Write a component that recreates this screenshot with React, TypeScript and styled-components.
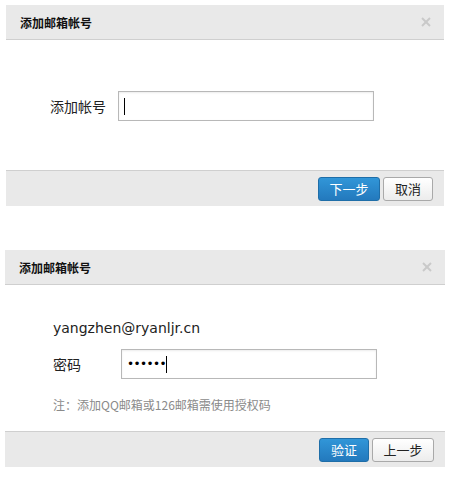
import React from 'react';
import styled, { createGlobalStyle } from 'styled-components';

const GlobalStyle = createGlobalStyle`
  body {
    margin: 0;
    background: #fff;
    font-family: "DejaVu Sans", "Noto Sans CJK SC", sans-serif;
    color: #222;
  }
`;

const Page = styled.div`
  display: flex;
  flex-direction: column;
  gap: 44px;
  padding-top: 5px;
`;

const Dialog = styled.div<{ $left: number; $right: number }>`
  display: flex;
  flex-direction: column;
  margin: 0 ${({ $right }) => $right}px 0 ${({ $left }) => $left}px;
  background: #fff;
`;

const Header = styled.div`
  display: flex;
  align-items: center;
  justify-content: space-between;
  height: 34px;
  padding: 0 13px 0 14px;
  background: #e9e9e9;
  border-bottom: 1px solid #cfcfcf;
`;

const Title = styled.h5`
  margin: 0;
  font-family: "Noto Sans CJK SC", sans-serif;
  font-size: 12px;
  font-weight: 700;
  color: #111;
`;

const CloseIcon = styled.svg`
  width: 10px;
  height: 10px;
  stroke: #c9c9c9;
  stroke-width: 2;
`;

const Body = styled.div<{ $height: number; $pad: string }>`
  display: flex;
  flex-direction: column;
  height: ${({ $height }) => $height}px;
  padding: ${({ $pad }) => $pad};
  box-sizing: border-box;
`;

const Row = styled.div`
  display: flex;
  align-items: center;
`;

const Label = styled.span<{ $width: number }>`
  width: ${({ $width }) => $width}px;
  font-family: "Noto Sans CJK SC", sans-serif;
  font-size: 14px;
  color: #222;
`;

const Field = styled.div`
  display: flex;
  align-items: center;
  width: 256px;
  height: 30px;
  box-sizing: border-box;
  padding: 0 5px;
  border: 1px solid #b8b8b8;
  box-shadow: inset 0 1px 2px rgba(0, 0, 0, 0.08);
  background: #fff;
`;

const Dots = styled.span`
  font-family: "DejaVu Sans", sans-serif;
  font-size: 12px;
  letter-spacing: -0.6px;
  color: #000;
`;

const Caret = styled.span`
  width: 1px;
  height: 17px;
  background: #000;
`;

const Email = styled.div`
  font-family: "DejaVu Sans", sans-serif;
  font-size: 14px;
  line-height: 20px;
  color: #222;
  margin-bottom: 11px;
`;

const Note = styled.div`
  margin-top: 17px;
  font-family: "Noto Sans CJK SC", sans-serif;
  font-size: 12px;
  color: #8a8a8a;
`;

const Footer = styled.div`
  display: flex;
  justify-content: flex-end;
  align-items: center;
  gap: 3px;
  height: 35px;
  padding-right: 11px;
  background: #e9e9e9;
  border-top: 1px solid #cfcfcf;
`;

const Button = styled.button<{ $primary?: boolean; $width: number }>`
  width: ${({ $width }) => $width}px;
  height: 24px;
  padding: 0;
  border-radius: 3px;
  font-family: "Noto Sans CJK SC", sans-serif;
  font-size: 13px;
  cursor: pointer;
  border: 1px solid ${({ $primary }) => ($primary ? '#1f6ea8' : '#a9a9a9')};
  color: ${({ $primary }) => ($primary ? '#fff' : '#222')};
  background: ${({ $primary }) =>
    $primary ? 'linear-gradient(#3196d8, #2379bd)' : 'linear-gradient(#ffffff, #ececec)'};
`;

const Close = () => (
  <CloseIcon viewBox="0 0 10 10">
    <line x1="1" y1="1" x2="9" y2="9" />
    <line x1="9" y1="1" x2="1" y2="9" />
  </CloseIcon>
);

export default function App() {
  return (
    <>
      <GlobalStyle />
      <Page>
        <Dialog $left={6} $right={8}>
          <Header>
            <Title>添加邮箱帐号</Title>
            <Close />
          </Header>
          <Body $height={130} $pad="51px 0 0 44px">
            <Row>
              <Label $width={68}>添加帐号</Label>
              <Field>
                <Caret />
              </Field>
            </Row>
          </Body>
          <Footer>
            <Button $primary $width={62}>下一步</Button>
            <Button $width={50}>取消</Button>
          </Footer>
        </Dialog>

        <Dialog $left={5} $right={7}>
          <Header>
            <Title>添加邮箱帐号</Title>
            <Close />
          </Header>
          <Body $height={146} $pad="33px 0 0 48px">
            <Email>yangzhen@ryanljr.cn</Email>
            <Row>
              <Label $width={68}>密码</Label>
              <Field>
                <Dots>••••••</Dots>
                <Caret />
              </Field>
            </Row>
            <Note>注：添加QQ邮箱或126邮箱需使用授权码</Note>
          </Body>
          <Footer>
            <Button $primary $width={50}>验证</Button>
            <Button $width={62}>上一步</Button>
          </Footer>
        </Dialog>
      </Page>
    </>
  );
}
